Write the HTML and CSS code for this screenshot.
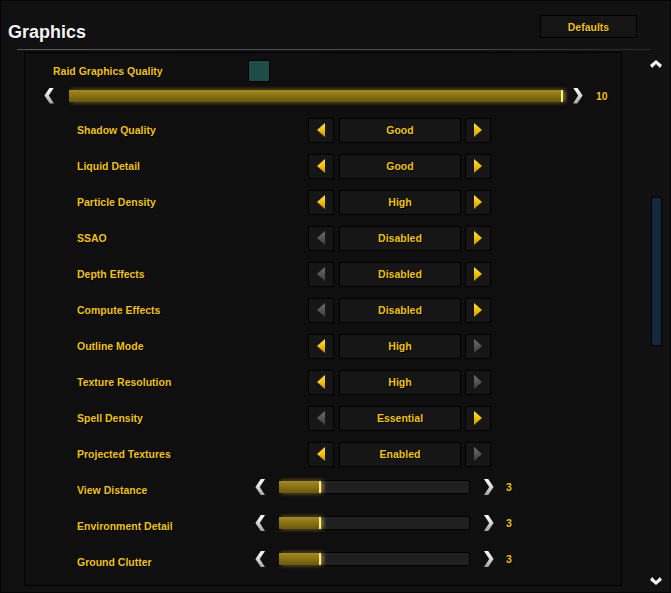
FILE: index.html
```html
<!DOCTYPE html>
<html>
<head>
<meta charset="utf-8">
<link rel="stylesheet" href="styles.css">
</head>
<body>
<div class="window">
  <div class="header">
    <h1 class="title">Graphics</h1>
    <div class="btn-defaults">Defaults</div>
  </div>
  <div class="separator"></div>
  <div class="main">
    <div class="panel">
      <div class="raid-row">
        <div class="raid-label">Raid Graphics Quality</div>
        <div class="checkbox"></div>
      </div>
      <div class="raid-slider">
        <div class="chev chev-l"></div>
        <div class="track track-wide"><div class="fill" style="width:100%"></div></div>
        <div class="chev chev-r"></div>
        <div class="value">10</div>
      </div>
      <div class="rows">
        <div class="row"><div class="label label-sel">Shadow Quality</div><div class="sel"><div class="sbtn"><span class="tri tri-l"></span></div><div class="sval">Good</div><div class="sbtn"><span class="tri tri-r"></span></div></div></div>
        <div class="row"><div class="label label-sel">Liquid Detail</div><div class="sel"><div class="sbtn"><span class="tri tri-l"></span></div><div class="sval">Good</div><div class="sbtn"><span class="tri tri-r"></span></div></div></div>
        <div class="row"><div class="label label-sel">Particle Density</div><div class="sel"><div class="sbtn"><span class="tri tri-l"></span></div><div class="sval">High</div><div class="sbtn"><span class="tri tri-r"></span></div></div></div>
        <div class="row"><div class="label label-sel">SSAO</div><div class="sel"><div class="sbtn"><span class="tri tri-l off"></span></div><div class="sval">Disabled</div><div class="sbtn"><span class="tri tri-r"></span></div></div></div>
        <div class="row"><div class="label label-sel">Depth Effects</div><div class="sel"><div class="sbtn"><span class="tri tri-l off"></span></div><div class="sval">Disabled</div><div class="sbtn"><span class="tri tri-r"></span></div></div></div>
        <div class="row"><div class="label label-sel">Compute Effects</div><div class="sel"><div class="sbtn"><span class="tri tri-l off"></span></div><div class="sval">Disabled</div><div class="sbtn"><span class="tri tri-r"></span></div></div></div>
        <div class="row"><div class="label label-sel">Outline Mode</div><div class="sel"><div class="sbtn"><span class="tri tri-l"></span></div><div class="sval">High</div><div class="sbtn"><span class="tri tri-r off"></span></div></div></div>
        <div class="row"><div class="label label-sel">Texture Resolution</div><div class="sel"><div class="sbtn"><span class="tri tri-l"></span></div><div class="sval">High</div><div class="sbtn"><span class="tri tri-r off"></span></div></div></div>
        <div class="row"><div class="label label-sel">Spell Density</div><div class="sel"><div class="sbtn"><span class="tri tri-l off"></span></div><div class="sval">Essential</div><div class="sbtn"><span class="tri tri-r"></span></div></div></div>
        <div class="row"><div class="label label-sel">Projected Textures</div><div class="sel"><div class="sbtn"><span class="tri tri-l"></span></div><div class="sval">Enabled</div><div class="sbtn"><span class="tri tri-r off"></span></div></div></div>
        <div class="row"><div class="label label-sld">View Distance</div><div class="sld"><div class="chev chev-l"></div><div class="track track-narrow"><div class="fill" style="width:22%"></div></div><div class="chev chev-r"></div><div class="value value-sm">3</div></div></div>
        <div class="row"><div class="label label-sld">Environment Detail</div><div class="sld"><div class="chev chev-l"></div><div class="track track-narrow"><div class="fill" style="width:22%"></div></div><div class="chev chev-r"></div><div class="value value-sm">3</div></div></div>
        <div class="row"><div class="label label-sld">Ground Clutter</div><div class="sld"><div class="chev chev-l"></div><div class="track track-narrow"><div class="fill" style="width:22%"></div></div><div class="chev chev-r"></div><div class="value value-sm">3</div></div></div>
      </div>
    </div>
    <div class="scrollbar">
      <div class="schev schev-up"></div>
      <div class="thumb"></div>
      <div class="schev schev-down"></div>
    </div>
  </div>
</div>
</body>
</html>
```

FILE: styles.css
```css
* { box-sizing: border-box; }
html, body { margin: 0; padding: 0; background: #0b0b0b; }
body { font-family: "Liberation Sans", Arial, sans-serif; }

.window {
  width: 671px;
  height: 593px;
  border: 1px solid #050505;
  background: #111111;
  display: flex;
  flex-direction: column;
}

.header {
  height: 48px;
  display: flex;
  justify-content: space-between;
  align-items: flex-start;
  padding: 0 33px 0 7px;
}

.title {
  margin: 21px 0 0 0;
  font-size: 18px;
  line-height: 20px;
  font-weight: bold;
  color: #f4f4f4;
  text-shadow: 1px 1px 0 #000;
}

.btn-defaults {
  margin-top: 14px;
  width: 97px;
  height: 23px;
  background: #151515;
  border: 1px solid #000;
  color: #f2c500;
  font-size: 10.5px;
  font-weight: bold;
  display: flex;
  align-items: center;
  justify-content: center;
  text-shadow: 1px 1px 0 #000, 0 0 1px #000;
}

.separator {
  height: 1px;
  margin: 0 19px 0 16px;
  background: linear-gradient(to right, #5a5a5a, #4a4a4a 70%, #2a2a2a);
}

.main {
  margin-top: 2px;
  display: flex;
  flex: 1;
}

.panel {
  margin-left: 23px;
  width: 598px;
  height: 534px;
  border: 1px solid #000;
  background: #0f0f0f;
  display: flex;
  flex-direction: column;
}

.raid-row {
  margin-top: 7px;
  height: 22px;
  display: flex;
  align-items: center;
}

.raid-label {
  width: 223px;
  padding-left: 28px;
}

.raid-label, .label {
  color: #f2c500;
  font-size: 10.5px;
  font-weight: bold;
  text-shadow: 1px 1px 0 #000, 0 0 1px #000;
  white-space: nowrap;
}

.checkbox {
  width: 22px;
  height: 22px;
  background: #1e4c46;
  border: 1px solid #000;
}

.raid-slider {
  margin-top: 5px;
  height: 17px;
  display: flex;
  align-items: center;
  padding-left: 19px;
}

.chev {
  width: 10px;
  height: 16px;
  background: linear-gradient(#ffffff, #dcdcdc 45%, #a0a0a0);
}
.chev-l { clip-path: polygon(58% 0, 100% 0, 48% 50%, 100% 100%, 58% 100%, 4% 50%); }
.chev-r { clip-path: polygon(0 0, 42% 0, 96% 50%, 42% 100%, 0 100%, 52% 50%); }

.track {
  height: 14px;
  background: #202020;
  border: 1px solid #000;
}
.track-wide { width: 496px; margin: 0 9px 0 14px; }
.track-narrow { width: 192px; margin: 0 14px 0 13px; }

.fill {
  height: 100%;
  background: linear-gradient(#a58b1e, #8a7414 45%, #6b580c);
  border-right: 2px solid #fff07a;
  box-shadow: 2px 0 4px rgba(255, 230, 110, 0.55);
}

.value {
  margin-left: 13px;
  color: #f2c500;
  font-size: 10.5px;
  font-weight: bold;
  text-shadow: 1px 1px 0 #000, 0 0 1px #000;
}
.value-sm { margin-left: 12px; }

.rows {
  margin-top: 8px;
  display: flex;
  flex-direction: column;
}

.row {
  height: 36px;
  display: flex;
  align-items: center;
  padding-left: 52px;
}

.label-sel { width: 231px; }
.label-sld { width: 178px; }

.sel {
  display: flex;
  align-items: center;
}

.sbtn {
  width: 26px;
  height: 25px;
  background: #161616;
  border: 1px solid #000;
  display: flex;
  align-items: center;
  justify-content: center;
}
.sbtn + .sval { margin-left: 5px; }
.sval + .sbtn { margin-left: 4px; }

.sval {
  width: 122px;
  height: 25px;
  background: #161616;
  border: 1px solid #000;
  display: flex;
  align-items: center;
  justify-content: center;
  color: #f2c500;
  font-size: 10.5px;
  font-weight: bold;
  text-shadow: 1px 1px 0 #000, 0 0 1px #000;
}

.tri {
  display: block;
  width: 8px;
  height: 14px;
  background: linear-gradient(#ffe44a, #f2c200 50%, #c98f00);
}
.tri.off { background: linear-gradient(#6e6e6e, #555 50%, #3c3c3c); }
.tri-l { clip-path: polygon(0 50%, 100% 0, 100% 100%); }
.tri-r { clip-path: polygon(0 0, 100% 50%, 0 100%); }

.sld {
  display: flex;
  align-items: center;
  margin-bottom: 6px;
}

.scrollbar {
  flex: 1;
  height: 534px;
  display: flex;
  flex-direction: column;
  padding: 8px 0 1px 28px;
}

.schev {
  width: 12px;
  height: 8px;
  background: #f2f2f2;
}
.schev-up { clip-path: polygon(50% 0, 100% 62%, 83% 100%, 50% 50%, 17% 100%, 0 62%); }
.schev-down { margin-top: auto; clip-path: polygon(0 38%, 17% 0, 50% 50%, 83% 0, 100% 38%, 50% 100%); }

.thumb {
  margin: 129px 0 0 1px;
  width: 11px;
  height: 149px;
  background: #13293c;
  border: 1px solid #000;
}
```
